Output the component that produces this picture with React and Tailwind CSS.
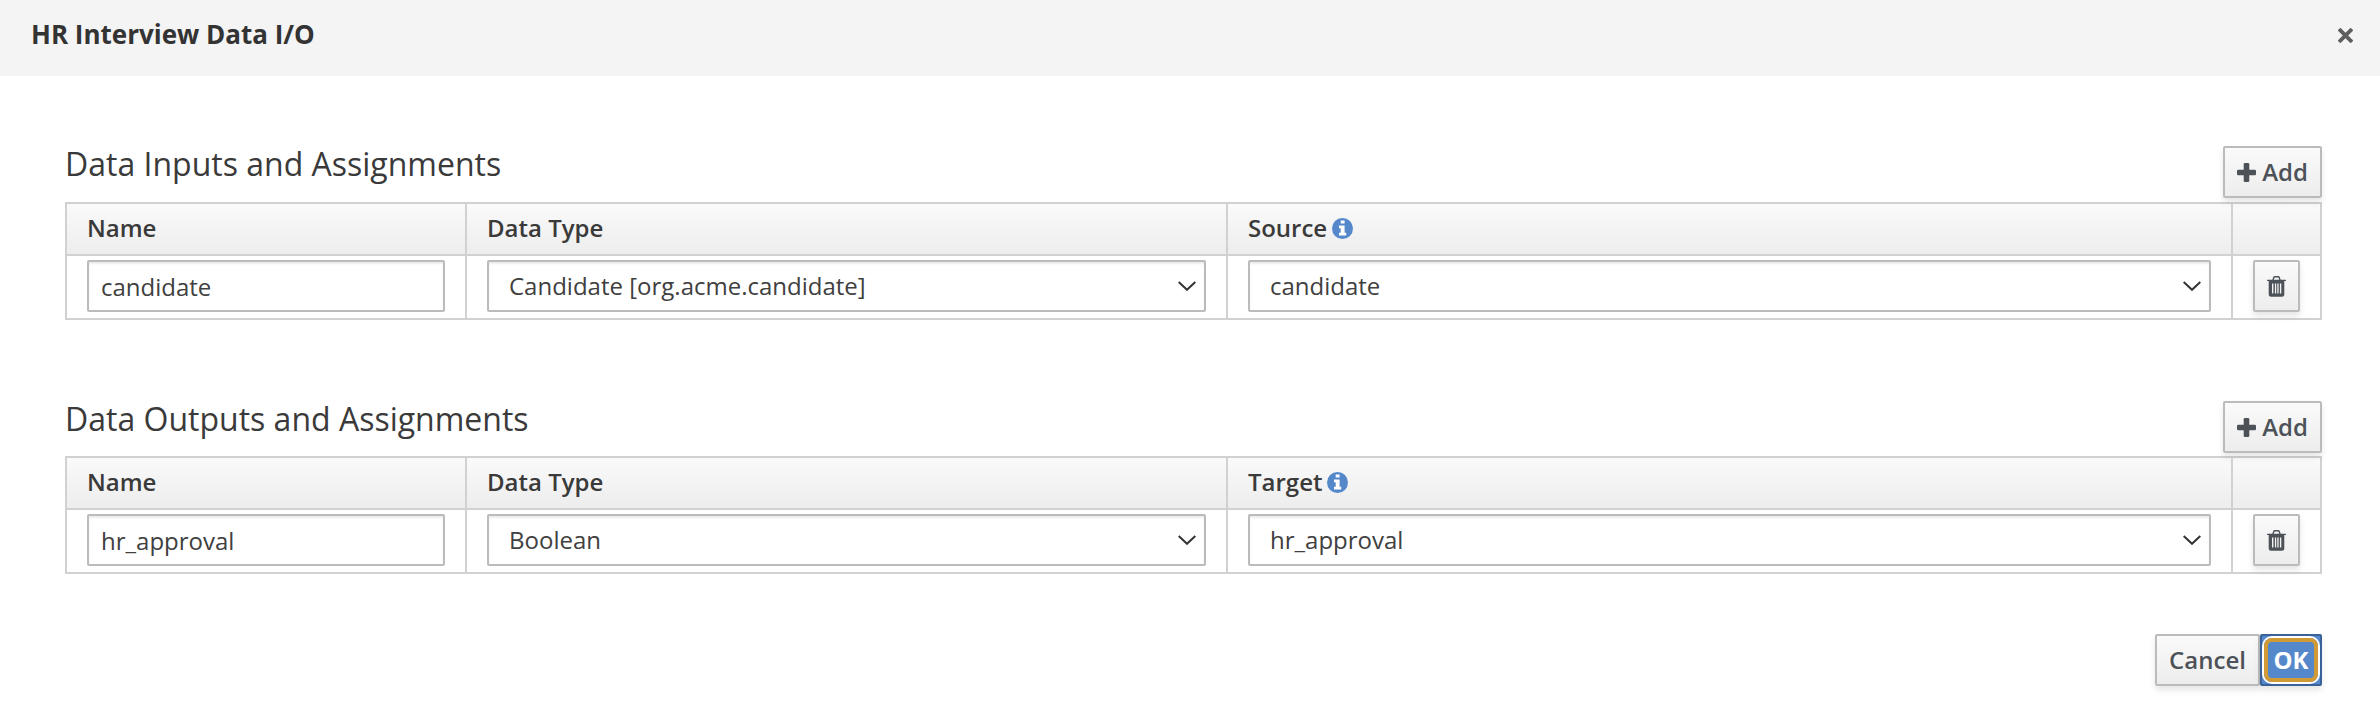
import React from "react";

const PlusIcon = () => (
  <svg className="h-[19px] w-[19px] shrink-0" viewBox="0 0 19 19" fill="#4d5258">
    <rect x="0" y="6.7" width="19" height="5.6" rx="1.3" />
    <rect x="6.7" y="0" width="5.6" height="19" rx="1.3" />
  </svg>
);

const InfoIcon = () => (
  <svg className="h-[21px] w-[21px] shrink-0" viewBox="0 0 21 21">
    <circle cx="10.5" cy="10.5" r="10.5" fill="#5488ca" />
    <path fill="#fff" d="M8.7 2.4h3.9v3H8.7zM7 7.6h5.6v7.2h1.6v2.6H7v-2.6h1.7v-4.6H7z" />
  </svg>
);

const TrashIcon = () => (
  <svg className="h-[21px] w-[19px] shrink-0" viewBox="0 0 19 21">
    <path fill="none" stroke="#4d5258" strokeWidth="1.4" d="M5.9 4.4 6.7 1.7Q7 .8 7.8 .8h3.4q.8 0 1.1.9l.8 2.7" />
    <rect x="0" y="3.7" width="19" height="1.3" rx=".5" fill="#4d5258" />
    <path
      fill="#4d5258"
      fillRule="evenodd"
      d="M1.7 5h15.6v13.3q0 2.5-2.5 2.5H4.2q-2.5 0-2.5-2.5zM5 7.6v10h1.4v-10zM7.9 7.6v10h1.3v-10zM10.3 7.6v10h1.3v-10zM12.9 7.6v10h1.4v-10z"
    />
  </svg>
);

const Chevron = () => (
  <svg className="h-[10px] w-[18px] shrink-0" viewBox="0 0 18 10">
    <path d="M.7 1 9 8.8 17.3 1" fill="none" stroke="#333" strokeWidth="2" />
  </svg>
);

const buttonBase =
  "flex h-[52px] items-center justify-center rounded-[2px] border-2 border-[#bbb] bg-linear-to-b from-[#fafafa] to-[#ededed] font-semibold text-[#4d5258] shadow-[0_4px_6px_rgba(3,3,3,0.1)]";

const Select = ({ children }) => (
  <button className="flex h-[52px] w-full items-center justify-between rounded-[2px] border-2 border-[#bbb] bg-white pr-[8.5px] pl-5 text-[#404040] shadow-[inset_0_2px_2px_rgba(3,3,3,0.075)]">
    <span>{children}</span>
    <Chevron />
  </button>
);

const columns = "grid grid-cols-[400px_761px_1005px_87px]";
const headCell = "flex items-center border-l-2 border-[#d1d1d1] pb-[2px] pl-5";

function Assignments({ title, titleRow, last, name, type, value }) {
  return (
    <section>
      <div className={"flex items-start justify-between " + titleRow}>
        <h2 className="pt-[1px] text-[32px] leading-[34px] font-normal text-[#3a3a3a]">{title}</h2>
        <button className={buttonBase + " w-[99px] gap-[6px]"}>
          <PlusIcon />
          <span>Add</span>
        </button>
      </div>
      <div className="border-2 border-l-0 border-[#d1d1d1]">
        <div className={columns + " h-[50px] bg-linear-to-b from-[#fafafa] to-[#ededed] font-semibold text-[#3a3a3a]"}>
          <div className={headCell}>Name</div>
          <div className={headCell}>Data Type</div>
          <div className={headCell + " gap-[5px]"}>
            {last}
            <InfoIcon />
          </div>
          <div className={headCell} />
        </div>
        <div className={columns + " h-16 border-t-2 border-[#d1d1d1]"}>
          <div className="border-l-2 border-[#d1d1d1] px-5 pt-1">
            <input
              defaultValue={name}
              className="h-[52px] w-full rounded-[2px] border-2 border-[#bbb] bg-white px-3 text-[#404040] shadow-[inset_0_2px_2px_rgba(3,3,3,0.075)] outline-none"
            />
          </div>
          <div className="border-l-2 border-[#d1d1d1] px-5 pt-1">
            <Select>{type}</Select>
          </div>
          <div className="border-l-2 border-[#d1d1d1] px-5 pt-1">
            <Select>{value}</Select>
          </div>
          <div className="border-l-2 border-[#d1d1d1] px-5 pt-1">
            <button aria-label="Delete" className={buttonBase + " w-[47px]"}>
              <TrashIcon />
            </button>
          </div>
        </div>
      </div>
    </section>
  );
}

export default function App() {
  return (
    <div className="flex h-[708px] w-[2380px] flex-col overflow-hidden bg-white font-['Open_Sans',sans-serif] text-[24px] leading-[34px] text-[#333]">
      <header className="flex h-[76px] items-start justify-between bg-[#f4f4f4] pr-[27px] pl-[31px]">
        <h1 className="pt-[17px] text-[26px] font-bold">HR Interview Data I/O</h1>
        <button aria-label="Close" className="pt-[28px]">
          <svg className="h-[15px] w-[15px]" viewBox="0 0 15 15">
            <path d="M2.4 2.4 12.6 12.6M12.6 2.4 2.4 12.6" stroke="#5f5f5f" strokeWidth="3.8" strokeLinecap="square" />
          </svg>
        </button>
      </header>
      <main className="flex flex-col pt-[70px] pr-[58px] pl-[65px]">
        <Assignments title="Data Inputs and Assignments" titleRow="h-[56px]" last="Source" name="candidate" type="Candidate [org.acme.candidate]" value="candidate" />
        <div className="h-[81px]" />
        <Assignments title="Data Outputs and Assignments" titleRow="h-[55px]" last="Target" name="hr_approval" type="Boolean" value="hr_approval" />
        <div className="flex justify-end pt-[60px]">
          <button className={buttonBase + " w-[105px]"}>
            <span>Cancel</span>
          </button>
          <button className="flex h-[52px] w-[62px] items-center justify-center rounded-[2px] border-2 border-[#39629b] bg-[#5488ca] text-white shadow-[0_4px_6px_rgba(3,3,3,0.1)]">
            <span className="flex h-11 w-[54px] shrink-0 items-center justify-center rounded-[8px] border-4 border-[#d19a35] font-bold shadow-[0_0_0_2px_#fff]">OK</span>
          </button>
        </div>
      </main>
    </div>
  );
}
